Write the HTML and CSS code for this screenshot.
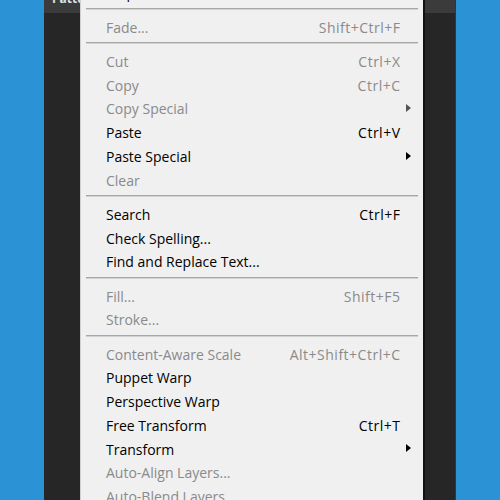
FILE: index.html
```html
<!DOCTYPE html>
<html lang="en">
<head>
  <meta charset="UTF-8">
  <title>Edit menu</title>
  <link rel="stylesheet" href="styles.css">
</head>
<body>
  <div class="stage">
    <div class="panel">
      <div class="panel-title">Patterns</div>
      <ul class="menu">
        <li class="item"><span class="label">Step Backward</span><span class="key">Alt+Ctrl+Z</span></li>
        <li class="sep"></li>
        <li class="item off"><span class="label">Fade...</span><span class="key">Shift+Ctrl+F</span></li>
        <li class="sep"></li>
        <li class="item off"><span class="label">Cut</span><span class="key">Ctrl+X</span></li>
        <li class="item off"><span class="label">Copy</span><span class="key">Ctrl+C</span></li>
        <li class="item off sub"><span class="label">Copy Special</span></li>
        <li class="item"><span class="label">Paste</span><span class="key">Ctrl+V</span></li>
        <li class="item sub"><span class="label">Paste Special</span></li>
        <li class="item off"><span class="label">Clear</span></li>
        <li class="sep"></li>
        <li class="item"><span class="label">Search</span><span class="key">Ctrl+F</span></li>
        <li class="item"><span class="label">Check Spelling...</span></li>
        <li class="item"><span class="label">Find and Replace Text...</span></li>
        <li class="sep"></li>
        <li class="item off"><span class="label">Fill...</span><span class="key">Shift+F5</span></li>
        <li class="item off"><span class="label">Stroke...</span></li>
        <li class="sep"></li>
        <li class="item off"><span class="label">Content-Aware Scale</span><span class="key">Alt+Shift+Ctrl+C</span></li>
        <li class="item"><span class="label">Puppet Warp</span></li>
        <li class="item"><span class="label">Perspective Warp</span></li>
        <li class="item"><span class="label">Free Transform</span><span class="key">Ctrl+T</span></li>
        <li class="item sub"><span class="label">Transform</span></li>
        <li class="item off"><span class="label">Auto-Align Layers...</span></li>
        <li class="item off"><span class="label">Auto-Blend Layers...</span></li>
      </ul>
    </div>
  </div>
</body>
</html>
```

FILE: styles.css
```css
body {
  margin: 0;
  height: 500px;
  overflow: hidden;
  background: #2a92d5;
  font-family: "Open Sans", "Noto Sans", sans-serif;
}

.stage {
  display: flex;
  height: 500px;
  padding-left: 44px;
}

.panel {
  display: flex;
  width: 411px;
  background: linear-gradient(#3b3b3b 0 13px, #262626 13px);
  border-right: 1px solid #4a2f24;
}

.panel-title {
  width: 36px;
  flex: none;
  box-sizing: border-box;
  padding-left: 8px;
  margin-top: -9px;
  overflow: hidden;
  white-space: nowrap;
  color: #e0e0e0;
  font-size: 12px;
  font-weight: bold;
  line-height: 16px;
}

.menu {
  align-self: flex-start;
  width: 342px;
  flex: none;
  margin: -19px 0 0;
  padding: 0;
  list-style: none;
  background: #f0f0f0;
  border-left: 1px solid #cfcfcf;
  border-right: 2px solid #111;
}

.item {
  position: relative;
  display: flex;
  align-items: center;
  height: 23.75px;
  padding: 0 23px 0 25px;
  font-size: 14px;
  color: #000;
}

.item .label {
  flex: 1;
}

.item .key {
  letter-spacing: 0.5px;
  margin-right: -0.5px;
}

.item.off {
  color: #8a8a8a;
}

.item.sub::after {
  content: "";
  position: absolute;
  right: 12px;
  top: 7px;
  border-left: 5px solid #000;
  border-top: 4.5px solid transparent;
  border-bottom: 4.5px solid transparent;
}

.item.off.sub::after {
  border-left-color: #555;
}

.sep {
  height: 1px;
  margin: 3px 5px 5.5px;
  background: #a8a8a8;
  border-bottom: 1px solid #d2d2d2;
}
```
